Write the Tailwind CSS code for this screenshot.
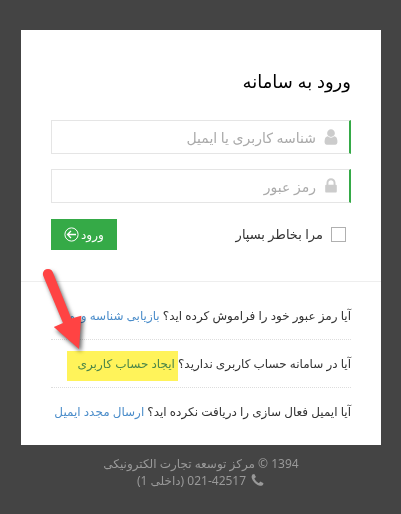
<!DOCTYPE html>
<html lang="fa" dir="rtl">
<head>
<meta charset="utf-8">
<meta name="viewport" content="width=device-width, initial-scale=1">
<title>ورود به سامانه</title>
<script src="https://cdn.jsdelivr.net/npm/@tailwindcss/browser@4"></script>
</head>
<body class="min-h-screen bg-[#444444] pt-[30px] pr-5 pb-5 pl-[21px] font-['Noto_Sans','DejaVu_Sans',sans-serif] text-xs text-[#333333]">
<main class="relative mx-auto max-w-[360px] bg-white">
  <form class="border-b border-[#eeeeee] px-[30px] pt-9 pb-[31px]" onsubmit="return false">
    <h1 class="mb-6 text-lg leading-[30px] text-black">ورود به سامانه</h1>
    <div class="mb-[15px] flex h-[34px] items-center gap-1.5 border border-r-2 border-[#e5e5e5] border-r-[#35aa47] pr-[9px]">
      <svg class="size-[18px] shrink-0 fill-[#cccccc]" viewBox="0 0 1792 1792" aria-hidden="true"><path d="M1536 1399q0 109-62.5 187t-150.5 78h-854q-88 0-150.5-78t-62.5-187q0-85 8.5-160.5t31.5-152 58.5-131 94-89 134.5-34.5q131 128 313 128t313-128q76 0 134.5 34.5t94 89 58.5 131 31.5 152 8.5 160.5zm-256-887q0 159-112.5 271.5t-271.5 112.5-271.5-112.5-112.5-271.5 112.5-271.5 271.5-112.5 271.5 112.5 112.5 271.5z"/></svg>
      <input type="text" aria-label="شناسه کاربری یا ایمیل" placeholder="شناسه کاربری یا ایمیل" class="h-full min-w-0 flex-1 text-sm outline-none placeholder:text-[#aaaaaa]">
    </div>
    <div class="mb-4 flex h-[34px] items-center gap-1.5 border border-r-2 border-[#e5e5e5] border-r-[#35aa47] pr-[9px]">
      <svg class="size-[18px] shrink-0 fill-[#cccccc]" viewBox="0 0 1792 1792" aria-hidden="true"><path d="M640 768h512v-192q0-106-75-181t-181-75-181 75-75 181v192zm832 96v576q0 40-28 68t-68 28h-960q-40 0-68-28t-28-68v-576q0-40 28-68t68-28h32v-192q0-184 132-316t316-132 316 132 132 316v192h32q40 0 68 28t28 68z"/></svg>
      <input type="password" aria-label="رمز عبور" placeholder="رمز عبور" class="h-full min-w-0 flex-1 text-sm outline-none placeholder:text-[#aaaaaa]">
    </div>
    <div class="flex items-center justify-between">
      <label class="flex items-center gap-2 pr-[5px] text-[13px]">
        <input type="checkbox" class="size-[15px] appearance-none border border-[#b0b0b0] bg-white checked:bg-[#35aa47]">
        مرا بخاطر بسپار
      </label>
      <button type="submit" class="flex h-[31px] items-center gap-0.5 bg-[#35aa47] px-[13px] text-xs text-white">
        ورود
        <svg class="size-[15px] fill-none stroke-white" viewBox="0 0 15 15" aria-hidden="true"><circle cx="7.5" cy="7.5" r="6.6"/><path d="M12 7.5H3.6M7 4L3.5 7.5L7 11" stroke-width="1.3"/></svg>
      </button>
    </div>
  </form>
  <section class="px-[30px] pt-[10px] pb-[9px]">
    <p class="flex h-12 items-center whitespace-nowrap border-b border-dotted border-[#dddddd]"><span>آیا رمز عبور خود را فراموش کرده اید؟ <a href="#" class="text-[#4b8dca]">بازیابی شناسه ورود</a></span></p>
    <p class="flex h-12 items-center whitespace-nowrap border-b border-dotted border-[#dddddd]"><span>آیا در سامانه حساب کاربری ندارید؟ <a href="#" class="text-[#4b8dca]">ایجاد حساب کاربری</a></span></p>
    <p class="flex h-12 items-center whitespace-nowrap"><span>آیا ایمیل فعال سازی را دریافت نکرده اید؟ <a href="#" class="text-[#4b8dca]">ارسال مجدد ایمیل</a></span></p>
  </section>
  <div class="pointer-events-none absolute top-[321px] left-[46px] h-[30px] w-[111px] bg-[#fff35a] mix-blend-multiply"></div>
  <svg class="pointer-events-none absolute top-[230px] left-[14px] h-[100px] w-[60px] overflow-visible drop-shadow-[2px_3px_2px_rgb(0_0_0/0.6)]" viewBox="35 260 60 100" aria-hidden="true"><path fill="#ff4343" d="M43.3 276A5 5 0 0 1 52.7 272L71.3 318.5L81.3 315.7L79 349L53.8 327L63 323Z"/></svg>
</main>
<footer class="pt-[10px] text-center leading-[17px] text-[#999999]">
  <p>1394 © مرکز توسعه تجارت الکترونیکی</p>
  <p class="flex items-center justify-center gap-1"><svg class="size-[15px] fill-[#999999]" viewBox="0 0 1792 1792" aria-hidden="true"><path d="M1600 1240q0 27-10 70.5t-21 68.5q-21 50-122 106-94 51-186 51-27 0-53-3.5t-57-12.5-47-14.5-55.5-20.5-49.5-18q-98-35-175-83-127-79-264-216t-216-264q-48-77-83-175-3-9-18-49.5t-20.5-55.5-14.5-47-12.5-57-3.5-53q0-92 51-186 56-101 106-122 25-11 68.5-21t70.5-10q14 0 21 3 18 6 53 76 11 19 30 54t35 63.5 31 53.5q3 4 17.5 25t21.5 35.5 7 28.5q0 20-28.5 50t-62 55-62 53-28.5 46q0 9 5 22.5t8.5 20.5 14 24 11.5 19q76 137 174 235t235 174q2 1 19 11.5t24 14 20.5 8.5 22.5 5q18 0 46-28.5t53-62 55-62 50-28.5q14 0 28.5 7t35.5 21.5 25 17.5q25 15 53.5 31t63.5 35 54 30q70 35 76 53 3 7 3 21z"/></svg><span><bdi dir="ltr">021-42517</bdi> (داخلی 1)</span></p>
</footer>
</body>
</html>
